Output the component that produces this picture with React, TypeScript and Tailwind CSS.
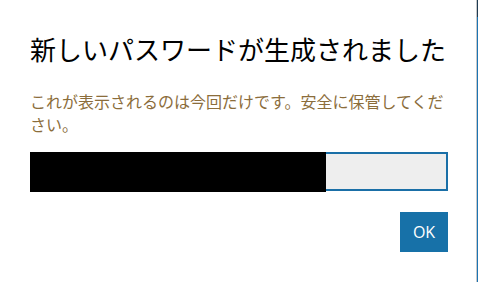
export default function App() {
  return (
    <div className="flex h-[282px] w-[480px] bg-white" style={{ fontFamily: '"Noto Sans CJK JP", "Noto Sans", sans-serif' }}>
      <div className="flex w-[476px] flex-col pl-[30px] pr-[28px]">
        <h1 className="mt-[31px] text-[26px] leading-[36px] font-normal text-black">新しいパスワードが生成されました</h1>
        <p className="mt-[23px] text-[16px] leading-[23px] text-[#8b6d3b]">
          これが表示されるのは今回だけです。安全に保管してください。
        </p>
        <div className="mt-[16px] flex h-[39px] w-[418px] border-2 border-[#1a6fa7] bg-[#eeeeee]">
          <div className="-m-[2px] h-[40px] w-[296px] bg-black" />
        </div>
        <div className="mt-[21px] flex justify-end">
          <button className="h-[40px] w-[48px] bg-[#1771a8] text-[16px] text-white" style={{ fontFamily: '"Open Sans", "Noto Sans", sans-serif' }}>OK</button>
        </div>
      </div>
      <div className="w-[1px] bg-[#c8c8c8]" />
      <div className="flex w-[1px] flex-col bg-[#1b74b3]">
        <div className="h-[17px] bg-[#1f3b52]" />
      </div>
      <div className="w-[2px] bg-white" />
    </div>
  );
}
